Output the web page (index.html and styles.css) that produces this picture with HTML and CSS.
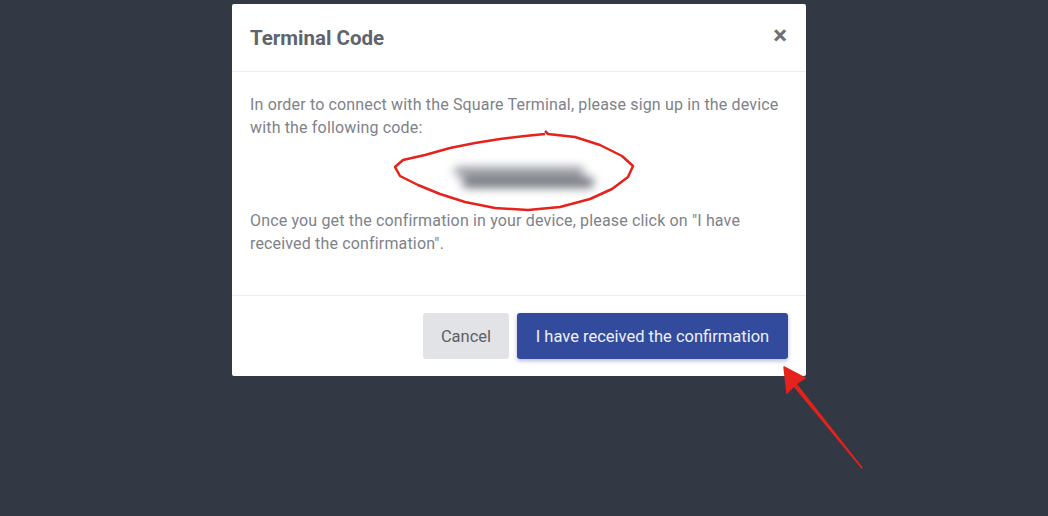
FILE: index.html
```html
<!DOCTYPE html>
<html>
<head>
<meta charset="utf-8">
<link rel="stylesheet" href="styles.css">
</head>
<body>
<div class="modal">
  <div class="modal-header">
    <h2 class="modal-title">Terminal Code</h2>
    <span class="close">&times;</span>
  </div>
  <div class="modal-body">
    <p class="text">In order to connect with the Square Terminal, please sign up in the device with the following code:</p>
    <div class="code-wrap">
      <div class="code">
        <span class="smear smear-top"></span>
        <span class="smear smear-bottom"></span>
      </div>
    </div>
    <p class="text">Once you get the confirmation in your device, please click on "I have received the confirmation".</p>
  </div>
  <div class="modal-footer">
    <button class="btn btn-cancel">Cancel</button>
    <button class="btn btn-primary">I have received the confirmation</button>
  </div>
</div>
<svg class="annot" width="1048" height="516" viewBox="0 0 1048 516">
  <path d="M545 131 L548 134 L575 137 L600 145 L622 156 L633 166 L628 177 L612 189 L590 199 L560 207 L528 210 L495 208 L465 202 L440 194 L418 185 L400 176 L395 167 L403 160 L425 155 L450 148 L475 143 L500 139 L525 136 L545 134" fill="none" stroke="#e5221c" stroke-width="2.5" stroke-linejoin="round"/>
  <path d="M862 468 L796 384 L805 378 L784 367 L787 393 L794 386 Z" fill="#e5221c" stroke="#e5221c" stroke-width="1.5" stroke-linejoin="round"/>
</svg>
</body>
</html>
```
FILE: styles.css
```css
html, body {
  margin: 0;
  padding: 0;
  width: 1048px;
  height: 516px;
  overflow: hidden;
  background: #333845;
  font-family: Roboto, "Liberation Sans", sans-serif;
}
.modal {
  margin: 4px 0 0 232px;
  width: 574px;
  background: #fff;
  border-radius: 2px;
}
.modal-header {
  height: 68px;
  box-sizing: border-box;
  padding: 0 18px 0 18px;
  display: flex;
  align-items: center;
  justify-content: space-between;
  border-bottom: 1px solid #eceef1;
}
.modal-title {
  margin: 0;
  font-size: 20.5px;
  font-weight: 700;
  color: #5f646c;
  padding-top: 1px;
}
.close {
  font-size: 26px;
  font-weight: 700;
  color: #6c6f75;
  line-height: 1;
  margin-top: -6px;
  margin-right: 1px;
}
.modal-body {
  height: 224px;
  box-sizing: border-box;
  padding: 21px 18px 0 18px;
  border-bottom: 1px solid #eceef1;
}
.text {
  margin: 0;
  font-size: 16px;
  letter-spacing: 0.16px;
  line-height: 23px;
  color: #7e8289;
}
.code-wrap {
  height: 70px;
  display: flex;
  justify-content: center;
  align-items: center;
}
.code {
  display: flex;
  flex-direction: column;
  margin-left: 10px;
  margin-top: 6px;
  filter: blur(5px);
}
.smear {
  display: block;
  height: 9px;
  border-radius: 5px;
}
.smear-top {
  width: 130px;
  background: #92969d;
  margin-left: 0;
}
.smear-bottom {
  width: 132px;
  height: 11px;
  background: #74787f;
  margin-left: 8px;
  margin-top: 1px;
}
.modal-footer {
  height: 80px;
  box-sizing: border-box;
  padding: 0 18px;
  display: flex;
  justify-content: flex-end;
  align-items: center;
  gap: 8px;
}
.btn {
  height: 46px;
  border: none;
  border-radius: 3px;
  font-family: Roboto, "Liberation Sans", sans-serif;
  font-size: 16.5px;
  font-weight: 400;
  padding: 0;
}
.btn-cancel {
  background: #e1e3e7;
  color: #5c6068;
  width: 86px;
}
.btn-primary {
  background: #334b9d;
  color: #eef0f8;
  width: 271px;
  box-shadow: 0 2px 4px rgba(40, 60, 140, 0.35);
}
.annot {
  position: absolute;
  left: 0;
  top: 0;
  pointer-events: none;
}
```
